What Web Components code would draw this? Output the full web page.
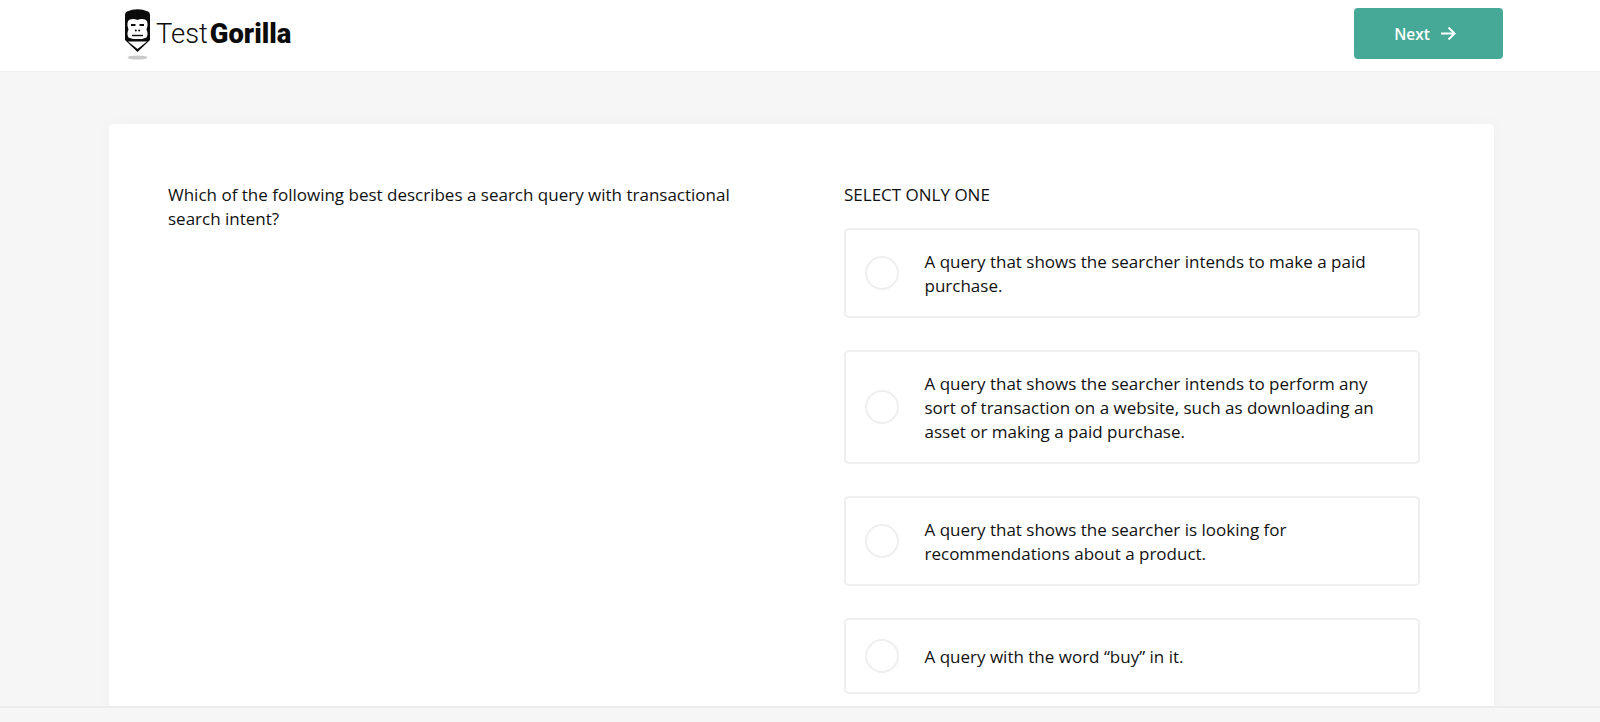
<!DOCTYPE html>
<html lang="en">
<head>
<meta charset="utf-8">
<title>TestGorilla</title>
<style>
  html, body { margin: 0; height: 100%; overflow: hidden; }
  body { font-family: "Open Sans", "Liberation Sans", sans-serif; color: #111; background: #f5f5f5; }
  test-page { height: 722px; }
</style>
</head>
<body>
<test-page>
  <tg-header slot="header"></tg-header>
  <question-card>
    <span slot="question">Which of the following best describes a search query with transactional search intent?</span>
    <answer-option style="--h:90px">A query that shows the searcher intends to make a paid purchase.</answer-option>
    <answer-option style="--h:114px">A query that shows the searcher intends to perform any sort of transaction on a website, such as downloading an asset or making a paid purchase.</answer-option>
    <answer-option style="--h:90px">A query that shows the searcher is looking for recommendations about a product.</answer-option>
    <answer-option style="--h:76px">A query with the word “buy” in it.</answer-option>
  </question-card>
</test-page>

<script>
class TestPage extends HTMLElement {
  constructor() {
    super();
    this.attachShadow({ mode: 'open' });
    this.shadowRoot.innerHTML = `
      <style>
        :host { display: flex; flex-direction: column; overflow: hidden; background: #f6f6f6; }
        main { flex: 1; min-height: 0; overflow: hidden; padding: 52px 106px 0 109px; }
        footer { flex: none; height: 14px; border-top: 2px solid #ececec; background: #f6f6f6; }
      </style>
      <slot name="header"></slot>
      <main><slot></slot></main>
      <footer></footer>`;
  }
}
customElements.define('test-page', TestPage);

class TgHeader extends HTMLElement {
  constructor() {
    super();
    this.attachShadow({ mode: 'open' });
    this.shadowRoot.innerHTML = `
      <style>
        :host { display: flex; flex: none; height: 72px; box-sizing: border-box; align-items: flex-start; justify-content: space-between; padding: 8px 97px 0 124px; background: #fff; border-bottom: 1px solid #eee; }
        .logo { display: flex; align-items: center; gap: 4px; color: #0c0c0c; }
        .mark { display: block; }
        .word { font-family: "Roboto", "Liberation Sans", sans-serif; font-size: 28.5px; line-height: 1; transform: scaleX(.96); transform-origin: left center; white-space: nowrap; margin-top: 1px; }
        .word span { font-weight: 300; }
        .word b { font-weight: 900; margin-left: 2px; }
        button { display: flex; align-items: center; justify-content: center; gap: 10px; width: 149px; height: 51px; padding: 0 7px 0 0; border: 0; border-radius: 4px; background: #46a997; color: #fff; font: 600 15.5px "Open Sans", sans-serif; }
      </style>
      <div class="logo">
        <svg class="mark" width="28" height="52" viewBox="0 0 28 52">
          <ellipse cx="13.5" cy="49.5" rx="10" ry="2" fill="#c9c9c9"/>
          <path d="M3 3.5 Q13.5 -1 24 3.5 Q26 4.2 26 7 V32 L13.5 44 L1 32 V7 Q1 4.2 3 3.5Z" fill="#0b0b0b"/>
          <path d="M4 33.5 H23 L13.5 41Z" fill="#fff"/>
          <path d="M6 11.5 Q10 10.5 13.5 12 Q17 10.5 21 11.5 Q24 12.5 23.5 18 L22.5 21.5 Q24.5 26 22.5 29.5 L18 31 H9 L4.5 29.5 Q2.5 26 4.5 21.5 L3.5 18 Q3 12.5 6 11.5Z" fill="#fff"/>
          <rect x="7" y="16" width="4.5" height="2" fill="#0b0b0b"/>
          <rect x="15.5" y="16" width="4.5" height="2" fill="#0b0b0b"/>
          <circle cx="11.8" cy="22.5" r="1" fill="#0b0b0b"/>
          <circle cx="15.2" cy="22.5" r="1" fill="#0b0b0b"/>
          <path d="M8 27.5 H19" stroke="#0b0b0b" stroke-width="1.4"/>
        </svg>
        <div class="word"><span>Test</span><b>Gorilla</b></div>
      </div>
      <button type="button">Next
        <svg width="16" height="15" viewBox="0 0 16 15" fill="none" stroke="#fff" stroke-width="2"><path d="M1 7.5 H14.5"/><path d="M8.5 1.5 L14.5 7.5 L8.5 13.5"/></svg>
      </button>`;
  }
}
customElements.define('tg-header', TgHeader);

class QuestionCard extends HTMLElement {
  constructor() {
    super();
    this.attachShadow({ mode: 'open' });
    this.shadowRoot.innerHTML = `
      <style>
        :host { display: grid; grid-template-columns: 676px 576px; box-sizing: border-box; min-height: 640px; padding: 59px 0 0 59px; background: #fff; border-radius: 4px 4px 0 0; box-shadow: 0 0 16px rgba(0,0,0,.03); font-size: 17px; line-height: 24px; color: #111; }
        .question { width: 590px; }
        .label { margin-bottom: 21px; }
        .options { display: flex; flex-direction: column; gap: 32px; }
      </style>
      <div class="question"><slot name="question"></slot></div>
      <div>
        <div class="label">SELECT ONLY ONE</div>
        <div class="options"><slot></slot></div>
      </div>`;
  }
}
customElements.define('question-card', QuestionCard);

class AnswerOption extends HTMLElement {
  constructor() {
    super();
    this.attachShadow({ mode: 'open' });
    this.shadowRoot.innerHTML = `
      <style>
        :host { display: flex; align-items: center; gap: 25.5px; box-sizing: border-box; width: 576px; height: var(--h); padding: 0 20px 0 19px; background: #fff; border: 2px solid #efefef; border-radius: 5px; }
        .radio { flex: none; width: 34px; height: 34px; box-sizing: border-box; border: 2px solid #efefef; border-radius: 50%; }
        .text { flex: 1; padding-top: 1px; }
      </style>
      <span class="radio"></span>
      <span class="text"><slot></slot></span>`;
  }
}
customElements.define('answer-option', AnswerOption);
</script>
</body>
</html>
